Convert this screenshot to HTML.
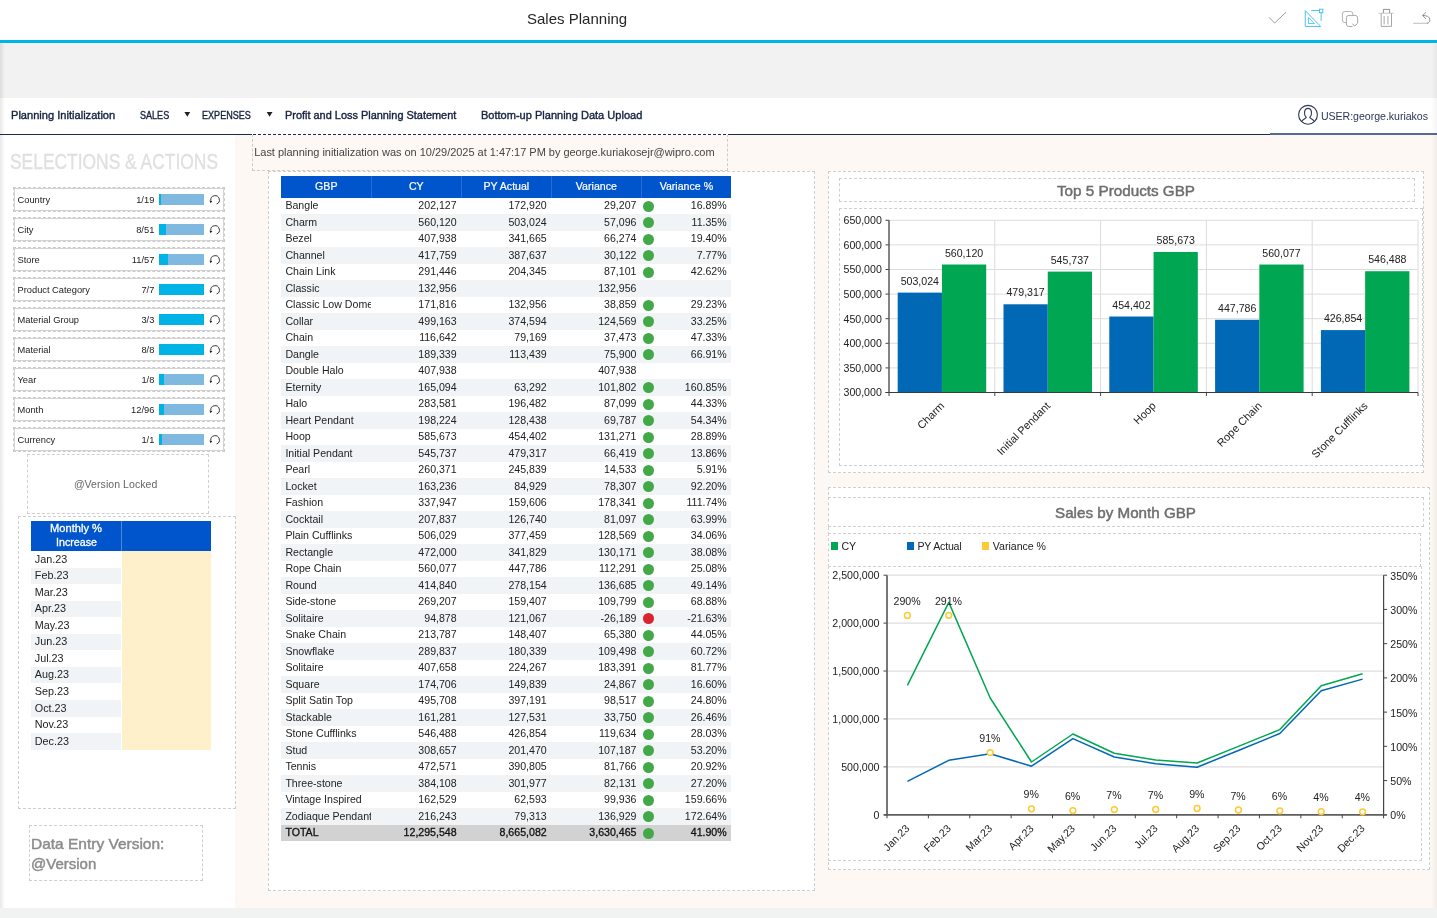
<!DOCTYPE html>
<html lang="en"><head><meta charset="utf-8"><title>Sales Planning</title>
<style>
html,body{margin:0;padding:0}
body{width:1437px;height:918px;position:relative;overflow:hidden;background:#fff;font-family:"Liberation Sans", sans-serif;}
div,span.t,svg.a{position:absolute}
.t{white-space:nowrap;display:block}
.d{border:1px dashed #cfcfcf}
svg{overflow:visible}
</style></head>
<body>
<div id="app" style="left:0;top:0;width:1437px;height:918px;will-change:transform">
<!-- title bar -->
<div style="left:0.00px;top:0.00px;width:1437.00px;height:40.00px;background:#fff"></div>
<span class="t" style="top:8.70px;font-size:15px;line-height:20px;color:#262626;left:527.00px;transform:scaleX(1.0012);transform-origin:0 0;">Sales Planning</span>
<div style="left:0.00px;top:40.00px;width:1437.00px;height:3.00px;background:#00b4e5"></div>
<div style="left:0.00px;top:43.00px;width:1437.00px;height:55.00px;background:#f2f2f2"></div>
<svg class="a" style="left:1260px;top:0" width="177" height="40" viewBox="1260 0 177 40" fill="none" stroke-linecap="round" stroke-linejoin="round">
<polyline points="1269.4,17.7 1274.6,23 1285.7,12.5" stroke="#9b9b9b" stroke-width="1" stroke-linejoin="miter"/>
<g stroke="#3fc0ee" stroke-width="0.95" stroke-linejoin="miter" stroke-linecap="butt">
<path d="M1305.25,10.6 V26.45 H1320.7 Z"/>
<path d="M1308.45,17.6 V23.55 H1314.3 Z" stroke-width="0.85"/>
<path d="M1311.2,10.55 H1319.4 M1321.15,12.8 V20.8"/>
<rect x="1319.5" y="9.2" width="3.3" height="3.5"/>
</g>
<g stroke="#b3b3b3" stroke-width="1">
<path d="M1346.6,22.6 H1344.9 A2.5,2.5 0 0 1 1342.4,20.1 V14 A2.5,2.5 0 0 1 1344.9,11.5 H1350.4 A2.5,2.5 0 0 1 1352.9,14 V15"/>
<path d="M1352.2,26.5 H1348.9 A2.5,2.5 0 0 1 1346.4,24 V17.9 A2.5,2.5 0 0 1 1348.9,15.4 H1355.1 A2.5,2.5 0 0 1 1357.6,17.9 V23.2" stroke="#a8a8a8"/>
<polyline points="1352.6,23.9 1354.6,26.1 1356.9,24" stroke="#8f8f8f" stroke-width="0.9"/>
</g>
<g stroke="#b0b0b0" stroke-width="0.95" stroke-linecap="butt" stroke-linejoin="miter">
<path d="M1378.5,13.25 H1393.5" stroke="#c4c4c4"/>
<path d="M1383.4,13 V9.4 H1389.6 V13" stroke="#8c8c8c"/>
<path d="M1381.2,13.3 V26.4 H1391.5 V13.3" stroke="#a2a2a2"/>
<path d="M1384.2,16 V24.6 M1387.9,16 V24.6" stroke="#c2c2c2" stroke-width="1.4"/>
</g>
<g stroke="#a9a9a9" stroke-width="0.95">
<path d="M1413.6,23.3 H1427.4" stroke="#bdbdbd" stroke-width="1.1"/>
<path d="M1427.4,23.3 C1430.6,23.1 1430.8,17.6 1427.4,16.3 C1425.9,15.7 1424.2,15.5 1422.7,15.45" stroke="#8f8f8f"/>
<path d="M1425.7,12.6 L1422.6,15.45 L1425.7,18.7" stroke="#8f8f8f"/>
</g>
</svg>
<!-- navigation -->
<div style="left:0.00px;top:98.00px;width:1437.00px;height:36.00px;background:#fff"></div>
<span class="t" style="top:106.68px;font-size:11.6px;line-height:15px;color:#15233f;left:11.00px;-webkit-text-stroke:0.4px #15233f;transform:scaleX(0.9565);transform-origin:0 0;">Planning Initialization</span>
<span class="t" style="top:106.68px;font-size:11.6px;line-height:15px;color:#15233f;left:139.70px;-webkit-text-stroke:0.4px #15233f;transform:scaleX(0.7809);transform-origin:0 0;">SALES</span>
<span class="t" style="top:106.68px;font-size:11.6px;line-height:15px;color:#15233f;left:202.30px;-webkit-text-stroke:0.4px #15233f;transform:scaleX(0.7822);transform-origin:0 0;">EXPENSES</span>
<span class="t" style="top:106.68px;font-size:11.6px;line-height:15px;color:#15233f;left:284.60px;-webkit-text-stroke:0.4px #15233f;transform:scaleX(0.9425);transform-origin:0 0;">Profit and Loss Planning Statement</span>
<span class="t" style="top:106.68px;font-size:11.6px;line-height:15px;color:#15233f;left:480.50px;-webkit-text-stroke:0.4px #15233f;transform:scaleX(0.9515);transform-origin:0 0;">Bottom-up Planning Data Upload</span>
<svg class="a" style="left:180px;top:108px" width="100" height="12" viewBox="180 108 100 12"><path d="M184.4,112 H190.2 L187.3,116.8 Z M266.7,112 H272.5 L269.6,116.8 Z" fill="#222"/></svg>
<div style="left:0.00px;top:133.90px;width:1437.00px;height:1.00px;background:#1c2b4d"></div>
<div style="left:1270.00px;top:133.00px;width:167.00px;height:1.90px;background:#566a93"></div>
<svg class="a" style="left:1296px;top:103px" width="24" height="24" viewBox="1296 103 24 24" fill="none" stroke="#2a3756" stroke-width="1.1">
<circle cx="1308" cy="114.8" r="9.4"/>
<path d="M1301.6,121.6 C1302.2,119.4 1305.6,118.9 1306.2,117.5 C1303.4,114.6 1304,108.4 1308,108.4 C1312,108.4 1312.6,114.6 1309.8,117.5 C1310.4,118.9 1313.8,119.4 1314.4,121.6"/>
</svg>
<span class="t" style="top:109.23px;font-size:10.6px;line-height:14px;color:#2a3756;letter-spacing:-0.033px;left:1320.90px;">USER:george.kuriakos</span>
<!-- body backgrounds -->
<div style="left:0.00px;top:134.90px;width:235.00px;height:773.10px;background:#fff"></div>
<div style="left:235.00px;top:134.90px;width:1202.00px;height:773.10px;background:#fdf8f4"></div>
<div style="left:0.00px;top:908.00px;width:1437.00px;height:10.00px;background:#f1f2f2"></div>
<div style="left:0.00px;top:43.00px;width:5.00px;height:865.00px;background:linear-gradient(to right,rgba(0,0,0,.09),rgba(0,0,0,0))"></div>
<div style="left:1431.00px;top:43.00px;width:6.00px;height:865.00px;background:linear-gradient(to left,rgba(0,0,0,.045),rgba(0,0,0,0))"></div>
<!-- selections & actions -->
<span class="t" style="top:148.02px;font-size:21.6px;line-height:28px;color:#e0e0e0;left:10.00px;-webkit-text-stroke:0.35px #e0e0e0;transform:scaleX(0.8062);transform-origin:0 0;">SELECTIONS &amp; ACTIONS</span>
<div class="d" style="left:13.00px;top:187.30px;width:210.20px;height:22.70px;background:#fff;border-color:#cbcbcb"></div>
<div style="left:14.20px;top:188.20px;width:209.80px;height:22.80px;border:1px solid #d3d3d3;box-sizing:border-box"></div>
<span class="t" style="top:193.58px;font-size:9.3px;line-height:12px;color:#222;left:17.50px;">Country</span>
<span class="t" style="top:193.58px;font-size:9.3px;line-height:12px;color:#222;left:-445.70px;width:600px;text-align:right;">1/19</span>
<div style="left:158.90px;top:193.90px;width:45.00px;height:11.00px;background:#7fb9e0"></div>
<div style="left:158.90px;top:193.90px;width:2.40px;height:11.00px;background:#00b3e6"></div>
<svg class="a" style="left:208px;top:193px" width="14" height="14" viewBox="208 193 14 14" fill="none"><path d="M210.8,200.4 A4.3,4.3 0 1 1 216.6,204.0" stroke="#2b2b2b" stroke-width="0.95"/><path d="M209.5,200.6 L212.4,201.0 L210.5,203.3 Z" fill="#1c1c1c"/></svg>
<div class="d" style="left:13.00px;top:217.30px;width:210.20px;height:22.70px;background:#fff;border-color:#cbcbcb"></div>
<div style="left:14.20px;top:218.20px;width:209.80px;height:22.80px;border:1px solid #d3d3d3;box-sizing:border-box"></div>
<span class="t" style="top:223.58px;font-size:9.3px;line-height:12px;color:#222;left:17.50px;">City</span>
<span class="t" style="top:223.58px;font-size:9.3px;line-height:12px;color:#222;left:-445.70px;width:600px;text-align:right;">8/51</span>
<div style="left:158.90px;top:223.90px;width:45.00px;height:11.00px;background:#7fb9e0"></div>
<div style="left:158.90px;top:223.90px;width:7.10px;height:11.00px;background:#00b3e6"></div>
<svg class="a" style="left:208px;top:223px" width="14" height="14" viewBox="208 223 14 14" fill="none"><path d="M210.8,230.4 A4.3,4.3 0 1 1 216.6,234.0" stroke="#2b2b2b" stroke-width="0.95"/><path d="M209.5,230.6 L212.4,231.0 L210.5,233.3 Z" fill="#1c1c1c"/></svg>
<div class="d" style="left:13.00px;top:247.30px;width:210.20px;height:22.70px;background:#fff;border-color:#cbcbcb"></div>
<div style="left:14.20px;top:248.20px;width:209.80px;height:22.80px;border:1px solid #d3d3d3;box-sizing:border-box"></div>
<span class="t" style="top:253.58px;font-size:9.3px;line-height:12px;color:#222;left:17.50px;">Store</span>
<span class="t" style="top:253.58px;font-size:9.3px;line-height:12px;color:#222;left:-445.70px;width:600px;text-align:right;">11/57</span>
<div style="left:158.90px;top:253.90px;width:45.00px;height:11.00px;background:#7fb9e0"></div>
<div style="left:158.90px;top:253.90px;width:8.70px;height:11.00px;background:#00b3e6"></div>
<svg class="a" style="left:208px;top:253px" width="14" height="14" viewBox="208 253 14 14" fill="none"><path d="M210.8,260.4 A4.3,4.3 0 1 1 216.6,264.0" stroke="#2b2b2b" stroke-width="0.95"/><path d="M209.5,260.6 L212.4,261.0 L210.5,263.3 Z" fill="#1c1c1c"/></svg>
<div class="d" style="left:13.00px;top:277.30px;width:210.20px;height:22.70px;background:#fff;border-color:#cbcbcb"></div>
<div style="left:14.20px;top:278.20px;width:209.80px;height:22.80px;border:1px solid #d3d3d3;box-sizing:border-box"></div>
<span class="t" style="top:283.58px;font-size:9.3px;line-height:12px;color:#222;left:17.50px;">Product Category</span>
<span class="t" style="top:283.58px;font-size:9.3px;line-height:12px;color:#222;left:-445.70px;width:600px;text-align:right;">7/7</span>
<div style="left:158.90px;top:283.90px;width:45.00px;height:11.00px;background:#7fb9e0"></div>
<div style="left:158.90px;top:283.90px;width:45.00px;height:11.00px;background:#00b3e6"></div>
<svg class="a" style="left:208px;top:283px" width="14" height="14" viewBox="208 283 14 14" fill="none"><path d="M210.8,290.4 A4.3,4.3 0 1 1 216.6,294.0" stroke="#2b2b2b" stroke-width="0.95"/><path d="M209.5,290.6 L212.4,291.0 L210.5,293.3 Z" fill="#1c1c1c"/></svg>
<div class="d" style="left:13.00px;top:307.30px;width:210.20px;height:22.70px;background:#fff;border-color:#cbcbcb"></div>
<div style="left:14.20px;top:308.20px;width:209.80px;height:22.80px;border:1px solid #d3d3d3;box-sizing:border-box"></div>
<span class="t" style="top:313.58px;font-size:9.3px;line-height:12px;color:#222;left:17.50px;">Material Group</span>
<span class="t" style="top:313.58px;font-size:9.3px;line-height:12px;color:#222;left:-445.70px;width:600px;text-align:right;">3/3</span>
<div style="left:158.90px;top:313.90px;width:45.00px;height:11.00px;background:#7fb9e0"></div>
<div style="left:158.90px;top:313.90px;width:45.00px;height:11.00px;background:#00b3e6"></div>
<svg class="a" style="left:208px;top:313px" width="14" height="14" viewBox="208 313 14 14" fill="none"><path d="M210.8,320.4 A4.3,4.3 0 1 1 216.6,324.0" stroke="#2b2b2b" stroke-width="0.95"/><path d="M209.5,320.6 L212.4,321.0 L210.5,323.3 Z" fill="#1c1c1c"/></svg>
<div class="d" style="left:13.00px;top:337.30px;width:210.20px;height:22.70px;background:#fff;border-color:#cbcbcb"></div>
<div style="left:14.20px;top:338.20px;width:209.80px;height:22.80px;border:1px solid #d3d3d3;box-sizing:border-box"></div>
<span class="t" style="top:343.58px;font-size:9.3px;line-height:12px;color:#222;left:17.50px;">Material</span>
<span class="t" style="top:343.58px;font-size:9.3px;line-height:12px;color:#222;left:-445.70px;width:600px;text-align:right;">8/8</span>
<div style="left:158.90px;top:343.90px;width:45.00px;height:11.00px;background:#7fb9e0"></div>
<div style="left:158.90px;top:343.90px;width:45.00px;height:11.00px;background:#00b3e6"></div>
<svg class="a" style="left:208px;top:343px" width="14" height="14" viewBox="208 343 14 14" fill="none"><path d="M210.8,350.4 A4.3,4.3 0 1 1 216.6,354.0" stroke="#2b2b2b" stroke-width="0.95"/><path d="M209.5,350.6 L212.4,351.0 L210.5,353.3 Z" fill="#1c1c1c"/></svg>
<div class="d" style="left:13.00px;top:367.30px;width:210.20px;height:22.70px;background:#fff;border-color:#cbcbcb"></div>
<div style="left:14.20px;top:368.20px;width:209.80px;height:22.80px;border:1px solid #d3d3d3;box-sizing:border-box"></div>
<span class="t" style="top:373.58px;font-size:9.3px;line-height:12px;color:#222;left:17.50px;">Year</span>
<span class="t" style="top:373.58px;font-size:9.3px;line-height:12px;color:#222;left:-445.70px;width:600px;text-align:right;">1/8</span>
<div style="left:158.90px;top:373.90px;width:45.00px;height:11.00px;background:#7fb9e0"></div>
<div style="left:158.90px;top:373.90px;width:5.60px;height:11.00px;background:#00b3e6"></div>
<svg class="a" style="left:208px;top:373px" width="14" height="14" viewBox="208 373 14 14" fill="none"><path d="M210.8,380.4 A4.3,4.3 0 1 1 216.6,384.0" stroke="#2b2b2b" stroke-width="0.95"/><path d="M209.5,380.6 L212.4,381.0 L210.5,383.3 Z" fill="#1c1c1c"/></svg>
<div class="d" style="left:13.00px;top:397.30px;width:210.20px;height:22.70px;background:#fff;border-color:#cbcbcb"></div>
<div style="left:14.20px;top:398.20px;width:209.80px;height:22.80px;border:1px solid #d3d3d3;box-sizing:border-box"></div>
<span class="t" style="top:403.58px;font-size:9.3px;line-height:12px;color:#222;left:17.50px;">Month</span>
<span class="t" style="top:403.58px;font-size:9.3px;line-height:12px;color:#222;left:-445.70px;width:600px;text-align:right;">12/96</span>
<div style="left:158.90px;top:403.90px;width:45.00px;height:11.00px;background:#7fb9e0"></div>
<div style="left:158.90px;top:403.90px;width:5.60px;height:11.00px;background:#00b3e6"></div>
<svg class="a" style="left:208px;top:403px" width="14" height="14" viewBox="208 403 14 14" fill="none"><path d="M210.8,410.4 A4.3,4.3 0 1 1 216.6,414.0" stroke="#2b2b2b" stroke-width="0.95"/><path d="M209.5,410.6 L212.4,411.0 L210.5,413.3 Z" fill="#1c1c1c"/></svg>
<div class="d" style="left:13.00px;top:427.30px;width:210.20px;height:22.70px;background:#fff;border-color:#cbcbcb"></div>
<div style="left:14.20px;top:428.20px;width:209.80px;height:22.80px;border:1px solid #d3d3d3;box-sizing:border-box"></div>
<span class="t" style="top:433.58px;font-size:9.3px;line-height:12px;color:#222;left:17.50px;">Currency</span>
<span class="t" style="top:433.58px;font-size:9.3px;line-height:12px;color:#222;left:-445.70px;width:600px;text-align:right;">1/1</span>
<div style="left:158.90px;top:433.90px;width:45.00px;height:11.00px;background:#7fb9e0"></div>
<div style="left:158.90px;top:433.90px;width:2.90px;height:11.00px;background:#00b3e6"></div>
<svg class="a" style="left:208px;top:433px" width="14" height="14" viewBox="208 433 14 14" fill="none"><path d="M210.8,440.4 A4.3,4.3 0 1 1 216.6,444.0" stroke="#2b2b2b" stroke-width="0.95"/><path d="M209.5,440.6 L212.4,441.0 L210.5,443.3 Z" fill="#1c1c1c"/></svg>
<div class="d" style="left:27.00px;top:454.00px;width:180.00px;height:58.00px;background:#fff;border-color:#cfcfcf"></div>
<span class="t" style="top:477.36px;font-size:10.5px;line-height:14px;color:#666;letter-spacing:0.069px;left:-184.37px;width:600px;text-align:center;">@Version Locked</span>
<div class="d" style="left:18.30px;top:516.00px;width:215.90px;height:290.60px;background:#fff;border-color:#cfcfcf"></div>
<div style="left:31.20px;top:520.80px;width:180.10px;height:30.20px;background:#0055cc"></div>
<div style="left:121.00px;top:520.80px;width:1.00px;height:30.20px;background:#4d88dd"></div>
<span class="t" style="top:521.06px;font-size:10.8px;line-height:14px;color:#fff;left:50.30px;-webkit-text-stroke:0.3px #fff;transform:scaleX(1.0316);transform-origin:0 0;">Monthly %</span>
<span class="t" style="top:534.86px;font-size:10.8px;line-height:14px;color:#fff;left:55.80px;-webkit-text-stroke:0.3px #fff;transform:scaleX(0.9898);transform-origin:0 0;">Increase</span>
<div style="left:31.20px;top:551.00px;width:90.30px;height:16.56px;background:#fff"></div>
<span class="t" style="top:551.56px;font-size:10.8px;line-height:14px;color:#222;left:34.80px;">Jan.23</span>
<div style="left:31.20px;top:567.56px;width:90.30px;height:16.56px;background:#f1f4f6"></div>
<span class="t" style="top:568.12px;font-size:10.8px;line-height:14px;color:#222;left:34.80px;">Feb.23</span>
<div style="left:31.20px;top:584.12px;width:90.30px;height:16.56px;background:#fff"></div>
<span class="t" style="top:584.68px;font-size:10.8px;line-height:14px;color:#222;left:34.80px;">Mar.23</span>
<div style="left:31.20px;top:600.68px;width:90.30px;height:16.56px;background:#f1f4f6"></div>
<span class="t" style="top:601.24px;font-size:10.8px;line-height:14px;color:#222;left:34.80px;">Apr.23</span>
<div style="left:31.20px;top:617.24px;width:90.30px;height:16.56px;background:#fff"></div>
<span class="t" style="top:617.80px;font-size:10.8px;line-height:14px;color:#222;left:34.80px;">May.23</span>
<div style="left:31.20px;top:633.80px;width:90.30px;height:16.56px;background:#f1f4f6"></div>
<span class="t" style="top:634.36px;font-size:10.8px;line-height:14px;color:#222;left:34.80px;">Jun.23</span>
<div style="left:31.20px;top:650.36px;width:90.30px;height:16.56px;background:#fff"></div>
<span class="t" style="top:650.92px;font-size:10.8px;line-height:14px;color:#222;left:34.80px;">Jul.23</span>
<div style="left:31.20px;top:666.92px;width:90.30px;height:16.56px;background:#f1f4f6"></div>
<span class="t" style="top:667.48px;font-size:10.8px;line-height:14px;color:#222;left:34.80px;">Aug.23</span>
<div style="left:31.20px;top:683.48px;width:90.30px;height:16.56px;background:#fff"></div>
<span class="t" style="top:684.04px;font-size:10.8px;line-height:14px;color:#222;left:34.80px;">Sep.23</span>
<div style="left:31.20px;top:700.04px;width:90.30px;height:16.56px;background:#f1f4f6"></div>
<span class="t" style="top:700.60px;font-size:10.8px;line-height:14px;color:#222;left:34.80px;">Oct.23</span>
<div style="left:31.20px;top:716.60px;width:90.30px;height:16.56px;background:#fff"></div>
<span class="t" style="top:717.16px;font-size:10.8px;line-height:14px;color:#222;left:34.80px;">Nov.23</span>
<div style="left:31.20px;top:733.16px;width:90.30px;height:16.56px;background:#f1f4f6"></div>
<span class="t" style="top:733.72px;font-size:10.8px;line-height:14px;color:#222;left:34.80px;">Dec.23</span>
<div style="left:121.50px;top:551.00px;width:89.80px;height:198.70px;background:#fff0cc"></div>
<div class="d" style="left:29.00px;top:825.00px;width:172.00px;height:53.60px;background:#fff;border-color:#cfcfcf"></div>
<span class="t" style="top:834.74px;font-size:14.6px;line-height:19px;color:#8c8c8c;left:31.30px;-webkit-text-stroke:0.45px #8c8c8c;transform:scaleX(1.0610);transform-origin:0 0;">Data Entry Version:</span>
<span class="t" style="top:854.54px;font-size:14.6px;line-height:19px;color:#8c8c8c;left:31.30px;-webkit-text-stroke:0.45px #8c8c8c;transform:scaleX(1.0283);transform-origin:0 0;">@Version</span>
<!-- info banner -->
<div class="d" style="left:251.80px;top:133.60px;width:474.50px;height:35.40px;background:#fdf8f4;border-color:#d2ccc8"></div>
<div style="left:252.00px;top:134.00px;width:476.00px;height:1.00px;background:repeating-linear-gradient(to right,#fff 0 1.4px,#1c2b4d 1.4px 3.6px,#fff 3.6px 5px)"></div>
<span class="t" style="top:144.99px;font-size:11px;line-height:14px;color:#444;letter-spacing:-0.022px;left:254.20px;">Last planning initialization was on 10/29/2025 at 1:47:17 PM by george.kuriakosejr@wipro.com</span>
<!-- data table -->
<div class="d" style="left:268.00px;top:170.50px;width:545.20px;height:718.10px;background:#fff;border-color:#cfcfcf"></div>
<div style="left:281.30px;top:175.50px;width:450.10px;height:22.30px;background:#0055cc"></div>
<div style="left:370.82px;top:175.50px;width:1.00px;height:22.30px;background:#2a6cd5"></div>
<div style="left:460.84px;top:175.50px;width:1.00px;height:22.30px;background:#2a6cd5"></div>
<div style="left:550.86px;top:175.50px;width:1.00px;height:22.30px;background:#2a6cd5"></div>
<div style="left:640.88px;top:175.50px;width:1.00px;height:22.30px;background:#2a6cd5"></div>
<span class="t" style="top:179.33px;font-size:10.6px;line-height:14px;color:#fff;left:26.31px;width:600px;text-align:center;-webkit-text-stroke:0.2px #fff;">GBP</span>
<span class="t" style="top:179.33px;font-size:10.6px;line-height:14px;color:#fff;left:116.33px;width:600px;text-align:center;-webkit-text-stroke:0.2px #fff;">CY</span>
<span class="t" style="top:179.33px;font-size:10.6px;line-height:14px;color:#fff;left:206.35px;width:600px;text-align:center;-webkit-text-stroke:0.2px #fff;">PY Actual</span>
<span class="t" style="top:179.33px;font-size:10.6px;line-height:14px;color:#fff;left:296.37px;width:600px;text-align:center;-webkit-text-stroke:0.2px #fff;">Variance</span>
<span class="t" style="top:179.33px;font-size:10.6px;line-height:14px;color:#fff;left:386.39px;width:600px;text-align:center;-webkit-text-stroke:0.2px #fff;">Variance %</span>
<div style="left:281.30px;top:197.80px;width:450.10px;height:16.50px;background:#fff"></div>
<span class="t" style="left:285.40px;top:198.38px;width:85.72px;overflow:hidden;font-size:10.6px;line-height:14px;color:#222;">Bangle</span>
<span class="t" style="top:198.38px;font-size:10.6px;line-height:14px;color:#222;left:-143.36px;width:600px;text-align:right;">202,127</span>
<span class="t" style="top:198.38px;font-size:10.6px;line-height:14px;color:#222;left:-53.34px;width:600px;text-align:right;">172,920</span>
<span class="t" style="top:198.38px;font-size:10.6px;line-height:14px;color:#222;left:36.48px;width:600px;text-align:right;">29,207</span>
<div style="left:643.10px;top:200.70px;width:11.00px;height:11.00px;background:#43a847;border-radius:50%"></div>
<span class="t" style="top:198.38px;font-size:10.6px;line-height:14px;color:#222;left:126.70px;width:600px;text-align:right;">16.89%</span>
<div style="left:281.30px;top:214.30px;width:450.10px;height:16.50px;background:#f1f4f6"></div>
<span class="t" style="left:285.40px;top:214.88px;width:85.72px;overflow:hidden;font-size:10.6px;line-height:14px;color:#222;">Charm</span>
<span class="t" style="top:214.88px;font-size:10.6px;line-height:14px;color:#222;left:-143.36px;width:600px;text-align:right;">560,120</span>
<span class="t" style="top:214.88px;font-size:10.6px;line-height:14px;color:#222;left:-53.34px;width:600px;text-align:right;">503,024</span>
<span class="t" style="top:214.88px;font-size:10.6px;line-height:14px;color:#222;left:36.48px;width:600px;text-align:right;">57,096</span>
<div style="left:643.10px;top:217.20px;width:11.00px;height:11.00px;background:#43a847;border-radius:50%"></div>
<span class="t" style="top:214.88px;font-size:10.6px;line-height:14px;color:#222;left:126.70px;width:600px;text-align:right;">11.35%</span>
<div style="left:281.30px;top:230.80px;width:450.10px;height:16.50px;background:#fff"></div>
<span class="t" style="left:285.40px;top:231.38px;width:85.72px;overflow:hidden;font-size:10.6px;line-height:14px;color:#222;">Bezel</span>
<span class="t" style="top:231.38px;font-size:10.6px;line-height:14px;color:#222;left:-143.36px;width:600px;text-align:right;">407,938</span>
<span class="t" style="top:231.38px;font-size:10.6px;line-height:14px;color:#222;left:-53.34px;width:600px;text-align:right;">341,665</span>
<span class="t" style="top:231.38px;font-size:10.6px;line-height:14px;color:#222;left:36.48px;width:600px;text-align:right;">66,274</span>
<div style="left:643.10px;top:233.70px;width:11.00px;height:11.00px;background:#43a847;border-radius:50%"></div>
<span class="t" style="top:231.38px;font-size:10.6px;line-height:14px;color:#222;left:126.70px;width:600px;text-align:right;">19.40%</span>
<div style="left:281.30px;top:247.30px;width:450.10px;height:16.50px;background:#f1f4f6"></div>
<span class="t" style="left:285.40px;top:247.88px;width:85.72px;overflow:hidden;font-size:10.6px;line-height:14px;color:#222;">Channel</span>
<span class="t" style="top:247.88px;font-size:10.6px;line-height:14px;color:#222;left:-143.36px;width:600px;text-align:right;">417,759</span>
<span class="t" style="top:247.88px;font-size:10.6px;line-height:14px;color:#222;left:-53.34px;width:600px;text-align:right;">387,637</span>
<span class="t" style="top:247.88px;font-size:10.6px;line-height:14px;color:#222;left:36.48px;width:600px;text-align:right;">30,122</span>
<div style="left:643.10px;top:250.20px;width:11.00px;height:11.00px;background:#43a847;border-radius:50%"></div>
<span class="t" style="top:247.88px;font-size:10.6px;line-height:14px;color:#222;left:126.70px;width:600px;text-align:right;">7.77%</span>
<div style="left:281.30px;top:263.80px;width:450.10px;height:16.50px;background:#fff"></div>
<span class="t" style="left:285.40px;top:264.38px;width:85.72px;overflow:hidden;font-size:10.6px;line-height:14px;color:#222;">Chain Link</span>
<span class="t" style="top:264.38px;font-size:10.6px;line-height:14px;color:#222;left:-143.36px;width:600px;text-align:right;">291,446</span>
<span class="t" style="top:264.38px;font-size:10.6px;line-height:14px;color:#222;left:-53.34px;width:600px;text-align:right;">204,345</span>
<span class="t" style="top:264.38px;font-size:10.6px;line-height:14px;color:#222;left:36.48px;width:600px;text-align:right;">87,101</span>
<div style="left:643.10px;top:266.70px;width:11.00px;height:11.00px;background:#43a847;border-radius:50%"></div>
<span class="t" style="top:264.38px;font-size:10.6px;line-height:14px;color:#222;left:126.70px;width:600px;text-align:right;">42.62%</span>
<div style="left:281.30px;top:280.30px;width:450.10px;height:16.50px;background:#f1f4f6"></div>
<span class="t" style="left:285.40px;top:280.88px;width:85.72px;overflow:hidden;font-size:10.6px;line-height:14px;color:#222;">Classic</span>
<span class="t" style="top:280.88px;font-size:10.6px;line-height:14px;color:#222;left:-143.36px;width:600px;text-align:right;">132,956</span>
<span class="t" style="top:280.88px;font-size:10.6px;line-height:14px;color:#222;left:36.48px;width:600px;text-align:right;">132,956</span>
<div style="left:281.30px;top:296.80px;width:450.10px;height:16.50px;background:#fff"></div>
<span class="t" style="left:285.40px;top:297.38px;width:85.72px;overflow:hidden;font-size:10.6px;line-height:14px;color:#222;">Classic Low Dome</span>
<span class="t" style="top:297.38px;font-size:10.6px;line-height:14px;color:#222;left:-143.36px;width:600px;text-align:right;">171,816</span>
<span class="t" style="top:297.38px;font-size:10.6px;line-height:14px;color:#222;left:-53.34px;width:600px;text-align:right;">132,956</span>
<span class="t" style="top:297.38px;font-size:10.6px;line-height:14px;color:#222;left:36.48px;width:600px;text-align:right;">38,859</span>
<div style="left:643.10px;top:299.70px;width:11.00px;height:11.00px;background:#43a847;border-radius:50%"></div>
<span class="t" style="top:297.38px;font-size:10.6px;line-height:14px;color:#222;left:126.70px;width:600px;text-align:right;">29.23%</span>
<div style="left:281.30px;top:313.30px;width:450.10px;height:16.50px;background:#f1f4f6"></div>
<span class="t" style="left:285.40px;top:313.88px;width:85.72px;overflow:hidden;font-size:10.6px;line-height:14px;color:#222;">Collar</span>
<span class="t" style="top:313.88px;font-size:10.6px;line-height:14px;color:#222;left:-143.36px;width:600px;text-align:right;">499,163</span>
<span class="t" style="top:313.88px;font-size:10.6px;line-height:14px;color:#222;left:-53.34px;width:600px;text-align:right;">374,594</span>
<span class="t" style="top:313.88px;font-size:10.6px;line-height:14px;color:#222;left:36.48px;width:600px;text-align:right;">124,569</span>
<div style="left:643.10px;top:316.20px;width:11.00px;height:11.00px;background:#43a847;border-radius:50%"></div>
<span class="t" style="top:313.88px;font-size:10.6px;line-height:14px;color:#222;left:126.70px;width:600px;text-align:right;">33.25%</span>
<div style="left:281.30px;top:329.80px;width:450.10px;height:16.50px;background:#fff"></div>
<span class="t" style="left:285.40px;top:330.38px;width:85.72px;overflow:hidden;font-size:10.6px;line-height:14px;color:#222;">Chain</span>
<span class="t" style="top:330.38px;font-size:10.6px;line-height:14px;color:#222;left:-143.36px;width:600px;text-align:right;">116,642</span>
<span class="t" style="top:330.38px;font-size:10.6px;line-height:14px;color:#222;left:-53.34px;width:600px;text-align:right;">79,169</span>
<span class="t" style="top:330.38px;font-size:10.6px;line-height:14px;color:#222;left:36.48px;width:600px;text-align:right;">37,473</span>
<div style="left:643.10px;top:332.70px;width:11.00px;height:11.00px;background:#43a847;border-radius:50%"></div>
<span class="t" style="top:330.38px;font-size:10.6px;line-height:14px;color:#222;left:126.70px;width:600px;text-align:right;">47.33%</span>
<div style="left:281.30px;top:346.30px;width:450.10px;height:16.50px;background:#f1f4f6"></div>
<span class="t" style="left:285.40px;top:346.88px;width:85.72px;overflow:hidden;font-size:10.6px;line-height:14px;color:#222;">Dangle</span>
<span class="t" style="top:346.88px;font-size:10.6px;line-height:14px;color:#222;left:-143.36px;width:600px;text-align:right;">189,339</span>
<span class="t" style="top:346.88px;font-size:10.6px;line-height:14px;color:#222;left:-53.34px;width:600px;text-align:right;">113,439</span>
<span class="t" style="top:346.88px;font-size:10.6px;line-height:14px;color:#222;left:36.48px;width:600px;text-align:right;">75,900</span>
<div style="left:643.10px;top:349.20px;width:11.00px;height:11.00px;background:#43a847;border-radius:50%"></div>
<span class="t" style="top:346.88px;font-size:10.6px;line-height:14px;color:#222;left:126.70px;width:600px;text-align:right;">66.91%</span>
<div style="left:281.30px;top:362.80px;width:450.10px;height:16.50px;background:#fff"></div>
<span class="t" style="left:285.40px;top:363.38px;width:85.72px;overflow:hidden;font-size:10.6px;line-height:14px;color:#222;">Double Halo</span>
<span class="t" style="top:363.38px;font-size:10.6px;line-height:14px;color:#222;left:-143.36px;width:600px;text-align:right;">407,938</span>
<span class="t" style="top:363.38px;font-size:10.6px;line-height:14px;color:#222;left:36.48px;width:600px;text-align:right;">407,938</span>
<div style="left:281.30px;top:379.30px;width:450.10px;height:16.50px;background:#f1f4f6"></div>
<span class="t" style="left:285.40px;top:379.88px;width:85.72px;overflow:hidden;font-size:10.6px;line-height:14px;color:#222;">Eternity</span>
<span class="t" style="top:379.88px;font-size:10.6px;line-height:14px;color:#222;left:-143.36px;width:600px;text-align:right;">165,094</span>
<span class="t" style="top:379.88px;font-size:10.6px;line-height:14px;color:#222;left:-53.34px;width:600px;text-align:right;">63,292</span>
<span class="t" style="top:379.88px;font-size:10.6px;line-height:14px;color:#222;left:36.48px;width:600px;text-align:right;">101,802</span>
<div style="left:643.10px;top:382.20px;width:11.00px;height:11.00px;background:#43a847;border-radius:50%"></div>
<span class="t" style="top:379.88px;font-size:10.6px;line-height:14px;color:#222;left:126.70px;width:600px;text-align:right;">160.85%</span>
<div style="left:281.30px;top:395.80px;width:450.10px;height:16.50px;background:#fff"></div>
<span class="t" style="left:285.40px;top:396.38px;width:85.72px;overflow:hidden;font-size:10.6px;line-height:14px;color:#222;">Halo</span>
<span class="t" style="top:396.38px;font-size:10.6px;line-height:14px;color:#222;left:-143.36px;width:600px;text-align:right;">283,581</span>
<span class="t" style="top:396.38px;font-size:10.6px;line-height:14px;color:#222;left:-53.34px;width:600px;text-align:right;">196,482</span>
<span class="t" style="top:396.38px;font-size:10.6px;line-height:14px;color:#222;left:36.48px;width:600px;text-align:right;">87,099</span>
<div style="left:643.10px;top:398.70px;width:11.00px;height:11.00px;background:#43a847;border-radius:50%"></div>
<span class="t" style="top:396.38px;font-size:10.6px;line-height:14px;color:#222;left:126.70px;width:600px;text-align:right;">44.33%</span>
<div style="left:281.30px;top:412.30px;width:450.10px;height:16.50px;background:#f1f4f6"></div>
<span class="t" style="left:285.40px;top:412.88px;width:85.72px;overflow:hidden;font-size:10.6px;line-height:14px;color:#222;">Heart Pendant</span>
<span class="t" style="top:412.88px;font-size:10.6px;line-height:14px;color:#222;left:-143.36px;width:600px;text-align:right;">198,224</span>
<span class="t" style="top:412.88px;font-size:10.6px;line-height:14px;color:#222;left:-53.34px;width:600px;text-align:right;">128,438</span>
<span class="t" style="top:412.88px;font-size:10.6px;line-height:14px;color:#222;left:36.48px;width:600px;text-align:right;">69,787</span>
<div style="left:643.10px;top:415.20px;width:11.00px;height:11.00px;background:#43a847;border-radius:50%"></div>
<span class="t" style="top:412.88px;font-size:10.6px;line-height:14px;color:#222;left:126.70px;width:600px;text-align:right;">54.34%</span>
<div style="left:281.30px;top:428.80px;width:450.10px;height:16.50px;background:#fff"></div>
<span class="t" style="left:285.40px;top:429.38px;width:85.72px;overflow:hidden;font-size:10.6px;line-height:14px;color:#222;">Hoop</span>
<span class="t" style="top:429.38px;font-size:10.6px;line-height:14px;color:#222;left:-143.36px;width:600px;text-align:right;">585,673</span>
<span class="t" style="top:429.38px;font-size:10.6px;line-height:14px;color:#222;left:-53.34px;width:600px;text-align:right;">454,402</span>
<span class="t" style="top:429.38px;font-size:10.6px;line-height:14px;color:#222;left:36.48px;width:600px;text-align:right;">131,271</span>
<div style="left:643.10px;top:431.70px;width:11.00px;height:11.00px;background:#43a847;border-radius:50%"></div>
<span class="t" style="top:429.38px;font-size:10.6px;line-height:14px;color:#222;left:126.70px;width:600px;text-align:right;">28.89%</span>
<div style="left:281.30px;top:445.30px;width:450.10px;height:16.50px;background:#f1f4f6"></div>
<span class="t" style="left:285.40px;top:445.88px;width:85.72px;overflow:hidden;font-size:10.6px;line-height:14px;color:#222;">Initial Pendant</span>
<span class="t" style="top:445.88px;font-size:10.6px;line-height:14px;color:#222;left:-143.36px;width:600px;text-align:right;">545,737</span>
<span class="t" style="top:445.88px;font-size:10.6px;line-height:14px;color:#222;left:-53.34px;width:600px;text-align:right;">479,317</span>
<span class="t" style="top:445.88px;font-size:10.6px;line-height:14px;color:#222;left:36.48px;width:600px;text-align:right;">66,419</span>
<div style="left:643.10px;top:448.20px;width:11.00px;height:11.00px;background:#43a847;border-radius:50%"></div>
<span class="t" style="top:445.88px;font-size:10.6px;line-height:14px;color:#222;left:126.70px;width:600px;text-align:right;">13.86%</span>
<div style="left:281.30px;top:461.80px;width:450.10px;height:16.50px;background:#fff"></div>
<span class="t" style="left:285.40px;top:462.38px;width:85.72px;overflow:hidden;font-size:10.6px;line-height:14px;color:#222;">Pearl</span>
<span class="t" style="top:462.38px;font-size:10.6px;line-height:14px;color:#222;left:-143.36px;width:600px;text-align:right;">260,371</span>
<span class="t" style="top:462.38px;font-size:10.6px;line-height:14px;color:#222;left:-53.34px;width:600px;text-align:right;">245,839</span>
<span class="t" style="top:462.38px;font-size:10.6px;line-height:14px;color:#222;left:36.48px;width:600px;text-align:right;">14,533</span>
<div style="left:643.10px;top:464.70px;width:11.00px;height:11.00px;background:#43a847;border-radius:50%"></div>
<span class="t" style="top:462.38px;font-size:10.6px;line-height:14px;color:#222;left:126.70px;width:600px;text-align:right;">5.91%</span>
<div style="left:281.30px;top:478.30px;width:450.10px;height:16.50px;background:#f1f4f6"></div>
<span class="t" style="left:285.40px;top:478.88px;width:85.72px;overflow:hidden;font-size:10.6px;line-height:14px;color:#222;">Locket</span>
<span class="t" style="top:478.88px;font-size:10.6px;line-height:14px;color:#222;left:-143.36px;width:600px;text-align:right;">163,236</span>
<span class="t" style="top:478.88px;font-size:10.6px;line-height:14px;color:#222;left:-53.34px;width:600px;text-align:right;">84,929</span>
<span class="t" style="top:478.88px;font-size:10.6px;line-height:14px;color:#222;left:36.48px;width:600px;text-align:right;">78,307</span>
<div style="left:643.10px;top:481.20px;width:11.00px;height:11.00px;background:#43a847;border-radius:50%"></div>
<span class="t" style="top:478.88px;font-size:10.6px;line-height:14px;color:#222;left:126.70px;width:600px;text-align:right;">92.20%</span>
<div style="left:281.30px;top:494.80px;width:450.10px;height:16.50px;background:#fff"></div>
<span class="t" style="left:285.40px;top:495.38px;width:85.72px;overflow:hidden;font-size:10.6px;line-height:14px;color:#222;">Fashion</span>
<span class="t" style="top:495.38px;font-size:10.6px;line-height:14px;color:#222;left:-143.36px;width:600px;text-align:right;">337,947</span>
<span class="t" style="top:495.38px;font-size:10.6px;line-height:14px;color:#222;left:-53.34px;width:600px;text-align:right;">159,606</span>
<span class="t" style="top:495.38px;font-size:10.6px;line-height:14px;color:#222;left:36.48px;width:600px;text-align:right;">178,341</span>
<div style="left:643.10px;top:497.70px;width:11.00px;height:11.00px;background:#43a847;border-radius:50%"></div>
<span class="t" style="top:495.38px;font-size:10.6px;line-height:14px;color:#222;left:126.70px;width:600px;text-align:right;">111.74%</span>
<div style="left:281.30px;top:511.30px;width:450.10px;height:16.50px;background:#f1f4f6"></div>
<span class="t" style="left:285.40px;top:511.88px;width:85.72px;overflow:hidden;font-size:10.6px;line-height:14px;color:#222;">Cocktail</span>
<span class="t" style="top:511.88px;font-size:10.6px;line-height:14px;color:#222;left:-143.36px;width:600px;text-align:right;">207,837</span>
<span class="t" style="top:511.88px;font-size:10.6px;line-height:14px;color:#222;left:-53.34px;width:600px;text-align:right;">126,740</span>
<span class="t" style="top:511.88px;font-size:10.6px;line-height:14px;color:#222;left:36.48px;width:600px;text-align:right;">81,097</span>
<div style="left:643.10px;top:514.20px;width:11.00px;height:11.00px;background:#43a847;border-radius:50%"></div>
<span class="t" style="top:511.88px;font-size:10.6px;line-height:14px;color:#222;left:126.70px;width:600px;text-align:right;">63.99%</span>
<div style="left:281.30px;top:527.80px;width:450.10px;height:16.50px;background:#fff"></div>
<span class="t" style="left:285.40px;top:528.38px;width:85.72px;overflow:hidden;font-size:10.6px;line-height:14px;color:#222;">Plain Cufflinks</span>
<span class="t" style="top:528.38px;font-size:10.6px;line-height:14px;color:#222;left:-143.36px;width:600px;text-align:right;">506,029</span>
<span class="t" style="top:528.38px;font-size:10.6px;line-height:14px;color:#222;left:-53.34px;width:600px;text-align:right;">377,459</span>
<span class="t" style="top:528.38px;font-size:10.6px;line-height:14px;color:#222;left:36.48px;width:600px;text-align:right;">128,569</span>
<div style="left:643.10px;top:530.70px;width:11.00px;height:11.00px;background:#43a847;border-radius:50%"></div>
<span class="t" style="top:528.38px;font-size:10.6px;line-height:14px;color:#222;left:126.70px;width:600px;text-align:right;">34.06%</span>
<div style="left:281.30px;top:544.30px;width:450.10px;height:16.50px;background:#f1f4f6"></div>
<span class="t" style="left:285.40px;top:544.88px;width:85.72px;overflow:hidden;font-size:10.6px;line-height:14px;color:#222;">Rectangle</span>
<span class="t" style="top:544.88px;font-size:10.6px;line-height:14px;color:#222;left:-143.36px;width:600px;text-align:right;">472,000</span>
<span class="t" style="top:544.88px;font-size:10.6px;line-height:14px;color:#222;left:-53.34px;width:600px;text-align:right;">341,829</span>
<span class="t" style="top:544.88px;font-size:10.6px;line-height:14px;color:#222;left:36.48px;width:600px;text-align:right;">130,171</span>
<div style="left:643.10px;top:547.20px;width:11.00px;height:11.00px;background:#43a847;border-radius:50%"></div>
<span class="t" style="top:544.88px;font-size:10.6px;line-height:14px;color:#222;left:126.70px;width:600px;text-align:right;">38.08%</span>
<div style="left:281.30px;top:560.80px;width:450.10px;height:16.50px;background:#fff"></div>
<span class="t" style="left:285.40px;top:561.38px;width:85.72px;overflow:hidden;font-size:10.6px;line-height:14px;color:#222;">Rope Chain</span>
<span class="t" style="top:561.38px;font-size:10.6px;line-height:14px;color:#222;left:-143.36px;width:600px;text-align:right;">560,077</span>
<span class="t" style="top:561.38px;font-size:10.6px;line-height:14px;color:#222;left:-53.34px;width:600px;text-align:right;">447,786</span>
<span class="t" style="top:561.38px;font-size:10.6px;line-height:14px;color:#222;left:36.48px;width:600px;text-align:right;">112,291</span>
<div style="left:643.10px;top:563.70px;width:11.00px;height:11.00px;background:#43a847;border-radius:50%"></div>
<span class="t" style="top:561.38px;font-size:10.6px;line-height:14px;color:#222;left:126.70px;width:600px;text-align:right;">25.08%</span>
<div style="left:281.30px;top:577.30px;width:450.10px;height:16.50px;background:#f1f4f6"></div>
<span class="t" style="left:285.40px;top:577.88px;width:85.72px;overflow:hidden;font-size:10.6px;line-height:14px;color:#222;">Round</span>
<span class="t" style="top:577.88px;font-size:10.6px;line-height:14px;color:#222;left:-143.36px;width:600px;text-align:right;">414,840</span>
<span class="t" style="top:577.88px;font-size:10.6px;line-height:14px;color:#222;left:-53.34px;width:600px;text-align:right;">278,154</span>
<span class="t" style="top:577.88px;font-size:10.6px;line-height:14px;color:#222;left:36.48px;width:600px;text-align:right;">136,685</span>
<div style="left:643.10px;top:580.20px;width:11.00px;height:11.00px;background:#43a847;border-radius:50%"></div>
<span class="t" style="top:577.88px;font-size:10.6px;line-height:14px;color:#222;left:126.70px;width:600px;text-align:right;">49.14%</span>
<div style="left:281.30px;top:593.80px;width:450.10px;height:16.50px;background:#fff"></div>
<span class="t" style="left:285.40px;top:594.38px;width:85.72px;overflow:hidden;font-size:10.6px;line-height:14px;color:#222;">Side-stone</span>
<span class="t" style="top:594.38px;font-size:10.6px;line-height:14px;color:#222;left:-143.36px;width:600px;text-align:right;">269,207</span>
<span class="t" style="top:594.38px;font-size:10.6px;line-height:14px;color:#222;left:-53.34px;width:600px;text-align:right;">159,407</span>
<span class="t" style="top:594.38px;font-size:10.6px;line-height:14px;color:#222;left:36.48px;width:600px;text-align:right;">109,799</span>
<div style="left:643.10px;top:596.70px;width:11.00px;height:11.00px;background:#43a847;border-radius:50%"></div>
<span class="t" style="top:594.38px;font-size:10.6px;line-height:14px;color:#222;left:126.70px;width:600px;text-align:right;">68.88%</span>
<div style="left:281.30px;top:610.30px;width:450.10px;height:16.50px;background:#f1f4f6"></div>
<span class="t" style="left:285.40px;top:610.88px;width:85.72px;overflow:hidden;font-size:10.6px;line-height:14px;color:#222;">Solitaire</span>
<span class="t" style="top:610.88px;font-size:10.6px;line-height:14px;color:#222;left:-143.36px;width:600px;text-align:right;">94,878</span>
<span class="t" style="top:610.88px;font-size:10.6px;line-height:14px;color:#222;left:-53.34px;width:600px;text-align:right;">121,067</span>
<span class="t" style="top:610.88px;font-size:10.6px;line-height:14px;color:#222;left:36.48px;width:600px;text-align:right;">-26,189</span>
<div style="left:643.10px;top:613.20px;width:11.00px;height:11.00px;background:#d9232e;border-radius:50%"></div>
<span class="t" style="top:610.88px;font-size:10.6px;line-height:14px;color:#222;left:126.70px;width:600px;text-align:right;">-21.63%</span>
<div style="left:281.30px;top:626.80px;width:450.10px;height:16.50px;background:#fff"></div>
<span class="t" style="left:285.40px;top:627.38px;width:85.72px;overflow:hidden;font-size:10.6px;line-height:14px;color:#222;">Snake Chain</span>
<span class="t" style="top:627.38px;font-size:10.6px;line-height:14px;color:#222;left:-143.36px;width:600px;text-align:right;">213,787</span>
<span class="t" style="top:627.38px;font-size:10.6px;line-height:14px;color:#222;left:-53.34px;width:600px;text-align:right;">148,407</span>
<span class="t" style="top:627.38px;font-size:10.6px;line-height:14px;color:#222;left:36.48px;width:600px;text-align:right;">65,380</span>
<div style="left:643.10px;top:629.70px;width:11.00px;height:11.00px;background:#43a847;border-radius:50%"></div>
<span class="t" style="top:627.38px;font-size:10.6px;line-height:14px;color:#222;left:126.70px;width:600px;text-align:right;">44.05%</span>
<div style="left:281.30px;top:643.30px;width:450.10px;height:16.50px;background:#f1f4f6"></div>
<span class="t" style="left:285.40px;top:643.88px;width:85.72px;overflow:hidden;font-size:10.6px;line-height:14px;color:#222;">Snowflake</span>
<span class="t" style="top:643.88px;font-size:10.6px;line-height:14px;color:#222;left:-143.36px;width:600px;text-align:right;">289,837</span>
<span class="t" style="top:643.88px;font-size:10.6px;line-height:14px;color:#222;left:-53.34px;width:600px;text-align:right;">180,339</span>
<span class="t" style="top:643.88px;font-size:10.6px;line-height:14px;color:#222;left:36.48px;width:600px;text-align:right;">109,498</span>
<div style="left:643.10px;top:646.20px;width:11.00px;height:11.00px;background:#43a847;border-radius:50%"></div>
<span class="t" style="top:643.88px;font-size:10.6px;line-height:14px;color:#222;left:126.70px;width:600px;text-align:right;">60.72%</span>
<div style="left:281.30px;top:659.80px;width:450.10px;height:16.50px;background:#fff"></div>
<span class="t" style="left:285.40px;top:660.38px;width:85.72px;overflow:hidden;font-size:10.6px;line-height:14px;color:#222;">Solitaire</span>
<span class="t" style="top:660.38px;font-size:10.6px;line-height:14px;color:#222;left:-143.36px;width:600px;text-align:right;">407,658</span>
<span class="t" style="top:660.38px;font-size:10.6px;line-height:14px;color:#222;left:-53.34px;width:600px;text-align:right;">224,267</span>
<span class="t" style="top:660.38px;font-size:10.6px;line-height:14px;color:#222;left:36.48px;width:600px;text-align:right;">183,391</span>
<div style="left:643.10px;top:662.70px;width:11.00px;height:11.00px;background:#43a847;border-radius:50%"></div>
<span class="t" style="top:660.38px;font-size:10.6px;line-height:14px;color:#222;left:126.70px;width:600px;text-align:right;">81.77%</span>
<div style="left:281.30px;top:676.30px;width:450.10px;height:16.50px;background:#f1f4f6"></div>
<span class="t" style="left:285.40px;top:676.88px;width:85.72px;overflow:hidden;font-size:10.6px;line-height:14px;color:#222;">Square</span>
<span class="t" style="top:676.88px;font-size:10.6px;line-height:14px;color:#222;left:-143.36px;width:600px;text-align:right;">174,706</span>
<span class="t" style="top:676.88px;font-size:10.6px;line-height:14px;color:#222;left:-53.34px;width:600px;text-align:right;">149,839</span>
<span class="t" style="top:676.88px;font-size:10.6px;line-height:14px;color:#222;left:36.48px;width:600px;text-align:right;">24,867</span>
<div style="left:643.10px;top:679.20px;width:11.00px;height:11.00px;background:#43a847;border-radius:50%"></div>
<span class="t" style="top:676.88px;font-size:10.6px;line-height:14px;color:#222;left:126.70px;width:600px;text-align:right;">16.60%</span>
<div style="left:281.30px;top:692.80px;width:450.10px;height:16.50px;background:#fff"></div>
<span class="t" style="left:285.40px;top:693.38px;width:85.72px;overflow:hidden;font-size:10.6px;line-height:14px;color:#222;">Split Satin Top</span>
<span class="t" style="top:693.38px;font-size:10.6px;line-height:14px;color:#222;left:-143.36px;width:600px;text-align:right;">495,708</span>
<span class="t" style="top:693.38px;font-size:10.6px;line-height:14px;color:#222;left:-53.34px;width:600px;text-align:right;">397,191</span>
<span class="t" style="top:693.38px;font-size:10.6px;line-height:14px;color:#222;left:36.48px;width:600px;text-align:right;">98,517</span>
<div style="left:643.10px;top:695.70px;width:11.00px;height:11.00px;background:#43a847;border-radius:50%"></div>
<span class="t" style="top:693.38px;font-size:10.6px;line-height:14px;color:#222;left:126.70px;width:600px;text-align:right;">24.80%</span>
<div style="left:281.30px;top:709.30px;width:450.10px;height:16.50px;background:#f1f4f6"></div>
<span class="t" style="left:285.40px;top:709.88px;width:85.72px;overflow:hidden;font-size:10.6px;line-height:14px;color:#222;">Stackable</span>
<span class="t" style="top:709.88px;font-size:10.6px;line-height:14px;color:#222;left:-143.36px;width:600px;text-align:right;">161,281</span>
<span class="t" style="top:709.88px;font-size:10.6px;line-height:14px;color:#222;left:-53.34px;width:600px;text-align:right;">127,531</span>
<span class="t" style="top:709.88px;font-size:10.6px;line-height:14px;color:#222;left:36.48px;width:600px;text-align:right;">33,750</span>
<div style="left:643.10px;top:712.20px;width:11.00px;height:11.00px;background:#43a847;border-radius:50%"></div>
<span class="t" style="top:709.88px;font-size:10.6px;line-height:14px;color:#222;left:126.70px;width:600px;text-align:right;">26.46%</span>
<div style="left:281.30px;top:725.80px;width:450.10px;height:16.50px;background:#fff"></div>
<span class="t" style="left:285.40px;top:726.38px;width:85.72px;overflow:hidden;font-size:10.6px;line-height:14px;color:#222;">Stone Cufflinks</span>
<span class="t" style="top:726.38px;font-size:10.6px;line-height:14px;color:#222;left:-143.36px;width:600px;text-align:right;">546,488</span>
<span class="t" style="top:726.38px;font-size:10.6px;line-height:14px;color:#222;left:-53.34px;width:600px;text-align:right;">426,854</span>
<span class="t" style="top:726.38px;font-size:10.6px;line-height:14px;color:#222;left:36.48px;width:600px;text-align:right;">119,634</span>
<div style="left:643.10px;top:728.70px;width:11.00px;height:11.00px;background:#43a847;border-radius:50%"></div>
<span class="t" style="top:726.38px;font-size:10.6px;line-height:14px;color:#222;left:126.70px;width:600px;text-align:right;">28.03%</span>
<div style="left:281.30px;top:742.30px;width:450.10px;height:16.50px;background:#f1f4f6"></div>
<span class="t" style="left:285.40px;top:742.88px;width:85.72px;overflow:hidden;font-size:10.6px;line-height:14px;color:#222;">Stud</span>
<span class="t" style="top:742.88px;font-size:10.6px;line-height:14px;color:#222;left:-143.36px;width:600px;text-align:right;">308,657</span>
<span class="t" style="top:742.88px;font-size:10.6px;line-height:14px;color:#222;left:-53.34px;width:600px;text-align:right;">201,470</span>
<span class="t" style="top:742.88px;font-size:10.6px;line-height:14px;color:#222;left:36.48px;width:600px;text-align:right;">107,187</span>
<div style="left:643.10px;top:745.20px;width:11.00px;height:11.00px;background:#43a847;border-radius:50%"></div>
<span class="t" style="top:742.88px;font-size:10.6px;line-height:14px;color:#222;left:126.70px;width:600px;text-align:right;">53.20%</span>
<div style="left:281.30px;top:758.80px;width:450.10px;height:16.50px;background:#fff"></div>
<span class="t" style="left:285.40px;top:759.38px;width:85.72px;overflow:hidden;font-size:10.6px;line-height:14px;color:#222;">Tennis</span>
<span class="t" style="top:759.38px;font-size:10.6px;line-height:14px;color:#222;left:-143.36px;width:600px;text-align:right;">472,571</span>
<span class="t" style="top:759.38px;font-size:10.6px;line-height:14px;color:#222;left:-53.34px;width:600px;text-align:right;">390,805</span>
<span class="t" style="top:759.38px;font-size:10.6px;line-height:14px;color:#222;left:36.48px;width:600px;text-align:right;">81,766</span>
<div style="left:643.10px;top:761.70px;width:11.00px;height:11.00px;background:#43a847;border-radius:50%"></div>
<span class="t" style="top:759.38px;font-size:10.6px;line-height:14px;color:#222;left:126.70px;width:600px;text-align:right;">20.92%</span>
<div style="left:281.30px;top:775.30px;width:450.10px;height:16.50px;background:#f1f4f6"></div>
<span class="t" style="left:285.40px;top:775.88px;width:85.72px;overflow:hidden;font-size:10.6px;line-height:14px;color:#222;">Three-stone</span>
<span class="t" style="top:775.88px;font-size:10.6px;line-height:14px;color:#222;left:-143.36px;width:600px;text-align:right;">384,108</span>
<span class="t" style="top:775.88px;font-size:10.6px;line-height:14px;color:#222;left:-53.34px;width:600px;text-align:right;">301,977</span>
<span class="t" style="top:775.88px;font-size:10.6px;line-height:14px;color:#222;left:36.48px;width:600px;text-align:right;">82,131</span>
<div style="left:643.10px;top:778.20px;width:11.00px;height:11.00px;background:#43a847;border-radius:50%"></div>
<span class="t" style="top:775.88px;font-size:10.6px;line-height:14px;color:#222;left:126.70px;width:600px;text-align:right;">27.20%</span>
<div style="left:281.30px;top:791.80px;width:450.10px;height:16.50px;background:#fff"></div>
<span class="t" style="left:285.40px;top:792.38px;width:85.72px;overflow:hidden;font-size:10.6px;line-height:14px;color:#222;">Vintage Inspired</span>
<span class="t" style="top:792.38px;font-size:10.6px;line-height:14px;color:#222;left:-143.36px;width:600px;text-align:right;">162,529</span>
<span class="t" style="top:792.38px;font-size:10.6px;line-height:14px;color:#222;left:-53.34px;width:600px;text-align:right;">62,593</span>
<span class="t" style="top:792.38px;font-size:10.6px;line-height:14px;color:#222;left:36.48px;width:600px;text-align:right;">99,936</span>
<div style="left:643.10px;top:794.70px;width:11.00px;height:11.00px;background:#43a847;border-radius:50%"></div>
<span class="t" style="top:792.38px;font-size:10.6px;line-height:14px;color:#222;left:126.70px;width:600px;text-align:right;">159.66%</span>
<div style="left:281.30px;top:808.30px;width:450.10px;height:16.50px;background:#f1f4f6"></div>
<span class="t" style="left:285.40px;top:808.88px;width:85.72px;overflow:hidden;font-size:10.6px;line-height:14px;color:#222;">Zodiaque Pendant</span>
<span class="t" style="top:808.88px;font-size:10.6px;line-height:14px;color:#222;left:-143.36px;width:600px;text-align:right;">216,243</span>
<span class="t" style="top:808.88px;font-size:10.6px;line-height:14px;color:#222;left:-53.34px;width:600px;text-align:right;">79,313</span>
<span class="t" style="top:808.88px;font-size:10.6px;line-height:14px;color:#222;left:36.48px;width:600px;text-align:right;">136,929</span>
<div style="left:643.10px;top:811.20px;width:11.00px;height:11.00px;background:#43a847;border-radius:50%"></div>
<span class="t" style="top:808.88px;font-size:10.6px;line-height:14px;color:#222;left:126.70px;width:600px;text-align:right;">172.64%</span>
<div style="left:281.30px;top:824.80px;width:450.10px;height:16.50px;background:#d2d2d2"></div>
<span class="t" style="left:285.40px;top:825.38px;width:85.72px;overflow:hidden;font-size:10.6px;line-height:14px;color:#111;-webkit-text-stroke:0.3px #111;">TOTAL</span>
<span class="t" style="top:825.38px;font-size:10.6px;line-height:14px;color:#111;left:-143.36px;width:600px;text-align:right;-webkit-text-stroke:0.3px #111;">12,295,548</span>
<span class="t" style="top:825.38px;font-size:10.6px;line-height:14px;color:#111;left:-53.34px;width:600px;text-align:right;-webkit-text-stroke:0.3px #111;">8,665,082</span>
<span class="t" style="top:825.38px;font-size:10.6px;line-height:14px;color:#111;left:36.48px;width:600px;text-align:right;-webkit-text-stroke:0.3px #111;">3,630,465</span>
<div style="left:643.10px;top:827.70px;width:11.00px;height:11.00px;background:#43a847;border-radius:50%"></div>
<span class="t" style="top:825.38px;font-size:10.6px;line-height:14px;color:#111;left:126.70px;width:600px;text-align:right;-webkit-text-stroke:0.3px #111;">41.90%</span>
<!-- top 5 products chart -->
<div class="d" style="left:828.00px;top:171.00px;width:594.00px;height:300.00px;background:#fff;border-color:#cfcfcf"></div>
<div class="d" style="left:839.00px;top:178.00px;width:574.00px;height:22.00px;background:#fff;border-color:#cfcfcf"></div>
<div class="d" style="left:839.00px;top:208.00px;width:582.00px;height:256.00px;background:#fff;border-color:#cfcfcf"></div>
<span class="t" style="top:182.44px;font-size:14.6px;line-height:19px;color:#6e6e6e;left:1057.40px;-webkit-text-stroke:0.45px #6e6e6e;transform:scaleX(1.0436);transform-origin:0 0;">Top 5 Products GBP</span>
<svg class="a" style="left:840px;top:210px" width="583" height="255" viewBox="840 210 583 255" font-family='"Liberation Sans", sans-serif' font-size="10.6" fill="#222">
<line x1="889.0" x2="1418.0" y1="220.30" y2="220.30" stroke="#dcdcdc" stroke-width="1"/>
<line x1="885.5" x2="889.0" y1="220.30" y2="220.30" stroke="#444" stroke-width="1"/>
<text x="881.8" y="224.10" text-anchor="end">650,000</text>
<line x1="889.0" x2="1418.0" y1="244.90" y2="244.90" stroke="#dcdcdc" stroke-width="1"/>
<line x1="885.5" x2="889.0" y1="244.90" y2="244.90" stroke="#444" stroke-width="1"/>
<text x="881.8" y="248.70" text-anchor="end">600,000</text>
<line x1="889.0" x2="1418.0" y1="269.50" y2="269.50" stroke="#dcdcdc" stroke-width="1"/>
<line x1="885.5" x2="889.0" y1="269.50" y2="269.50" stroke="#444" stroke-width="1"/>
<text x="881.8" y="273.30" text-anchor="end">550,000</text>
<line x1="889.0" x2="1418.0" y1="294.10" y2="294.10" stroke="#dcdcdc" stroke-width="1"/>
<line x1="885.5" x2="889.0" y1="294.10" y2="294.10" stroke="#444" stroke-width="1"/>
<text x="881.8" y="297.90" text-anchor="end">500,000</text>
<line x1="889.0" x2="1418.0" y1="318.70" y2="318.70" stroke="#dcdcdc" stroke-width="1"/>
<line x1="885.5" x2="889.0" y1="318.70" y2="318.70" stroke="#444" stroke-width="1"/>
<text x="881.8" y="322.50" text-anchor="end">450,000</text>
<line x1="889.0" x2="1418.0" y1="343.30" y2="343.30" stroke="#dcdcdc" stroke-width="1"/>
<line x1="885.5" x2="889.0" y1="343.30" y2="343.30" stroke="#444" stroke-width="1"/>
<text x="881.8" y="347.10" text-anchor="end">400,000</text>
<line x1="889.0" x2="1418.0" y1="367.90" y2="367.90" stroke="#dcdcdc" stroke-width="1"/>
<line x1="885.5" x2="889.0" y1="367.90" y2="367.90" stroke="#444" stroke-width="1"/>
<text x="881.8" y="371.70" text-anchor="end">350,000</text>
<line x1="885.5" x2="889.0" y1="392.50" y2="392.50" stroke="#444" stroke-width="1"/>
<text x="881.8" y="396.30" text-anchor="end">300,000</text>
<line x1="994.80" x2="994.80" y1="220.3" y2="392.5" stroke="#dcdcdc" stroke-width="1"/>
<line x1="1100.60" x2="1100.60" y1="220.3" y2="392.5" stroke="#dcdcdc" stroke-width="1"/>
<line x1="1206.40" x2="1206.40" y1="220.3" y2="392.5" stroke="#dcdcdc" stroke-width="1"/>
<line x1="1312.20" x2="1312.20" y1="220.3" y2="392.5" stroke="#dcdcdc" stroke-width="1"/>
<line x1="1418.00" x2="1418.00" y1="220.3" y2="392.5" stroke="#dcdcdc" stroke-width="1"/>
<rect x="897.70" y="292.61" width="44.25" height="99.89" fill="#0068b5"/>
<rect x="941.95" y="264.52" width="44.25" height="127.98" fill="#00a651"/>
<text x="919.83" y="284.61" text-anchor="middle">503,024</text>
<text x="964.08" y="256.52" text-anchor="middle">560,120</text>
<rect x="1003.50" y="304.28" width="44.25" height="88.22" fill="#0068b5"/>
<rect x="1047.75" y="271.60" width="44.25" height="120.90" fill="#00a651"/>
<text x="1025.62" y="296.28" text-anchor="middle">479,317</text>
<text x="1069.88" y="263.60" text-anchor="middle">545,737</text>
<rect x="1109.30" y="316.53" width="44.25" height="75.97" fill="#0068b5"/>
<rect x="1153.55" y="251.95" width="44.25" height="140.55" fill="#00a651"/>
<text x="1131.42" y="308.53" text-anchor="middle">454,402</text>
<text x="1175.67" y="243.95" text-anchor="middle">585,673</text>
<rect x="1215.10" y="319.79" width="44.25" height="72.71" fill="#0068b5"/>
<rect x="1259.35" y="264.54" width="44.25" height="127.96" fill="#00a651"/>
<text x="1237.23" y="311.79" text-anchor="middle">447,786</text>
<text x="1281.48" y="256.54" text-anchor="middle">560,077</text>
<rect x="1320.90" y="330.09" width="44.25" height="62.41" fill="#0068b5"/>
<rect x="1365.15" y="271.23" width="44.25" height="121.27" fill="#00a651"/>
<text x="1343.03" y="322.09" text-anchor="middle">426,854</text>
<text x="1387.28" y="263.23" text-anchor="middle">546,488</text>
<line x1="889.0" x2="889.0" y1="220.3" y2="393.0" stroke="#5a5a5a" stroke-width="1.5"/>
<line x1="885.5" x2="1418.0" y1="392.5" y2="392.5" stroke="#3a3a3a" stroke-width="1.1"/>
<line x1="889.00" x2="889.00" y1="392.5" y2="396.0" stroke="#444" stroke-width="1"/>
<line x1="994.80" x2="994.80" y1="392.5" y2="396.0" stroke="#444" stroke-width="1"/>
<line x1="1100.60" x2="1100.60" y1="392.5" y2="396.0" stroke="#444" stroke-width="1"/>
<line x1="1206.40" x2="1206.40" y1="392.5" y2="396.0" stroke="#444" stroke-width="1"/>
<line x1="1312.20" x2="1312.20" y1="392.5" y2="396.0" stroke="#444" stroke-width="1"/>
<line x1="1418.00" x2="1418.00" y1="392.5" y2="396.0" stroke="#444" stroke-width="1"/>
<text transform="translate(945.10,406.5) rotate(-45)" text-anchor="end" font-size="11">Charm</text>
<text transform="translate(1050.90,406.5) rotate(-45)" text-anchor="end" font-size="11">Initial Pendant</text>
<text transform="translate(1156.70,406.5) rotate(-45)" text-anchor="end" font-size="11">Hoop</text>
<text transform="translate(1262.50,406.5) rotate(-45)" text-anchor="end" font-size="11">Rope Chain</text>
<text transform="translate(1368.30,406.5) rotate(-45)" text-anchor="end" font-size="11">Stone Cufflinks</text>
</svg>
<!-- sales by month chart -->
<div class="d" style="left:828.00px;top:487.00px;width:600.00px;height:381.00px;background:#fff;border-color:#cfcfcf"></div>
<div class="d" style="left:828.00px;top:497.00px;width:594.00px;height:28.00px;background:#fff;border-color:#cfcfcf"></div>
<div class="d" style="left:828.00px;top:533.00px;width:591.00px;height:32.00px;background:#fff;border-color:#cfcfcf"></div>
<div class="d" style="left:828.00px;top:566.00px;width:592.00px;height:293.00px;background:#fff;border-color:#cfcfcf"></div>
<span class="t" style="top:504.44px;font-size:14.6px;line-height:19px;color:#6e6e6e;left:1054.90px;-webkit-text-stroke:0.45px #6e6e6e;transform:scaleX(1.0408);transform-origin:0 0;">Sales by Month GBP</span>
<div style="left:831.30px;top:542.00px;width:6.90px;height:8.00px;background:#00a651"></div>
<span class="t" style="top:539.23px;font-size:10.6px;line-height:14px;color:#222;left:841.40px;">CY</span>
<div style="left:907.10px;top:542.00px;width:6.90px;height:8.00px;background:#0068b5"></div>
<span class="t" style="top:539.23px;font-size:10.6px;line-height:14px;color:#222;letter-spacing:-0.183px;left:917.40px;">PY Actual</span>
<div style="left:982.20px;top:542.00px;width:6.90px;height:8.00px;background:#ffc933"></div>
<span class="t" style="top:539.23px;font-size:10.6px;line-height:14px;color:#222;letter-spacing:-0.019px;left:992.80px;">Variance %</span>
<svg class="a" style="left:830px;top:567px" width="591" height="293" viewBox="830 567 591 293" font-family='"Liberation Sans", sans-serif' font-size="10.6" fill="#222">
<line x1="887.0" x2="1383.6" y1="575.20" y2="575.20" stroke="#dedede" stroke-width="1.2"/>
<line x1="883.5" x2="887.0" y1="575.20" y2="575.20" stroke="#444" stroke-width="1"/>
<text x="879.5" y="579.00" text-anchor="end">2,500,000</text>
<line x1="887.0" x2="1383.6" y1="623.12" y2="623.12" stroke="#dedede" stroke-width="1.2"/>
<line x1="883.5" x2="887.0" y1="623.12" y2="623.12" stroke="#444" stroke-width="1"/>
<text x="879.5" y="626.92" text-anchor="end">2,000,000</text>
<line x1="887.0" x2="1383.6" y1="671.04" y2="671.04" stroke="#dedede" stroke-width="1.2"/>
<line x1="883.5" x2="887.0" y1="671.04" y2="671.04" stroke="#444" stroke-width="1"/>
<text x="879.5" y="674.84" text-anchor="end">1,500,000</text>
<line x1="887.0" x2="1383.6" y1="718.96" y2="718.96" stroke="#dedede" stroke-width="1.2"/>
<line x1="883.5" x2="887.0" y1="718.96" y2="718.96" stroke="#444" stroke-width="1"/>
<text x="879.5" y="722.76" text-anchor="end">1,000,000</text>
<line x1="887.0" x2="1383.6" y1="766.88" y2="766.88" stroke="#dedede" stroke-width="1.2"/>
<line x1="883.5" x2="887.0" y1="766.88" y2="766.88" stroke="#444" stroke-width="1"/>
<text x="879.5" y="770.68" text-anchor="end">500,000</text>
<line x1="883.5" x2="887.0" y1="814.80" y2="814.80" stroke="#444" stroke-width="1"/>
<text x="879.5" y="818.60" text-anchor="end">0</text>
<line x1="1383.6" x2="1387.1" y1="575.20" y2="575.20" stroke="#444" stroke-width="1"/>
<text x="1390.3" y="579.60">350%</text>
<line x1="1383.6" x2="1387.1" y1="609.43" y2="609.43" stroke="#444" stroke-width="1"/>
<text x="1390.3" y="613.83">300%</text>
<line x1="1383.6" x2="1387.1" y1="643.66" y2="643.66" stroke="#444" stroke-width="1"/>
<text x="1390.3" y="648.06">250%</text>
<line x1="1383.6" x2="1387.1" y1="677.89" y2="677.89" stroke="#444" stroke-width="1"/>
<text x="1390.3" y="682.29">200%</text>
<line x1="1383.6" x2="1387.1" y1="712.11" y2="712.11" stroke="#444" stroke-width="1"/>
<text x="1390.3" y="716.51">150%</text>
<line x1="1383.6" x2="1387.1" y1="746.34" y2="746.34" stroke="#444" stroke-width="1"/>
<text x="1390.3" y="750.74">100%</text>
<line x1="1383.6" x2="1387.1" y1="780.57" y2="780.57" stroke="#444" stroke-width="1"/>
<text x="1390.3" y="784.97">50%</text>
<line x1="1383.6" x2="1387.1" y1="814.80" y2="814.80" stroke="#444" stroke-width="1"/>
<text x="1390.3" y="819.20">0%</text>
<polyline fill="none" stroke="#00a651" stroke-width="1.5" stroke-linejoin="round" points="907.4,685.4 948.8,602.4 990.2,698.0 1031.5,762.0 1072.9,734.0 1114.3,753.2 1155.7,760.1 1197.1,763.0 1238.4,746.4 1279.8,729.6 1321.2,685.7 1362.6,673.8"/>
<polyline fill="none" stroke="#0068b5" stroke-width="1.5" stroke-linejoin="round" points="907.4,781.4 948.8,760.3 990.2,753.7 1031.5,766.2 1072.9,738.6 1114.3,757.0 1155.7,763.7 1197.1,767.2 1238.4,750.5 1279.8,733.5 1321.2,690.8 1362.6,679.1"/>
<line x1="887.0" x2="887.0" y1="575.2" y2="815.3" stroke="#5e5e5e" stroke-width="1.7"/>
<line x1="1383.6" x2="1383.6" y1="575.2" y2="815.3" stroke="#444" stroke-width="1.2"/>
<line x1="883.8" x2="1386.8" y1="814.8" y2="814.8" stroke="#5e5e5e" stroke-width="1.7"/>
<line x1="887.00" x2="887.00" y1="814.8" y2="818.3" stroke="#444" stroke-width="1"/>
<line x1="928.38" x2="928.38" y1="814.8" y2="818.3" stroke="#444" stroke-width="1"/>
<line x1="969.77" x2="969.77" y1="814.8" y2="818.3" stroke="#444" stroke-width="1"/>
<line x1="1011.15" x2="1011.15" y1="814.8" y2="818.3" stroke="#444" stroke-width="1"/>
<line x1="1052.53" x2="1052.53" y1="814.8" y2="818.3" stroke="#444" stroke-width="1"/>
<line x1="1093.92" x2="1093.92" y1="814.8" y2="818.3" stroke="#444" stroke-width="1"/>
<line x1="1135.30" x2="1135.30" y1="814.8" y2="818.3" stroke="#444" stroke-width="1"/>
<line x1="1176.68" x2="1176.68" y1="814.8" y2="818.3" stroke="#444" stroke-width="1"/>
<line x1="1218.07" x2="1218.07" y1="814.8" y2="818.3" stroke="#444" stroke-width="1"/>
<line x1="1259.45" x2="1259.45" y1="814.8" y2="818.3" stroke="#444" stroke-width="1"/>
<line x1="1300.83" x2="1300.83" y1="814.8" y2="818.3" stroke="#444" stroke-width="1"/>
<line x1="1342.22" x2="1342.22" y1="814.8" y2="818.3" stroke="#444" stroke-width="1"/>
<line x1="1383.60" x2="1383.60" y1="814.8" y2="818.3" stroke="#444" stroke-width="1"/>
<circle cx="907.4" cy="615.5" r="2.9" fill="#fff" stroke="#ffc933" stroke-width="1.5"/>
<text x="907.1" y="605.0" text-anchor="middle">290%</text>
<text transform="translate(910.20,829.2) rotate(-45)" text-anchor="end" font-size="10.6">Jan.23</text>
<circle cx="948.8" cy="615.3" r="2.9" fill="#fff" stroke="#ffc933" stroke-width="1.5"/>
<text x="948.5" y="604.8" text-anchor="middle">291%</text>
<text transform="translate(951.58,829.2) rotate(-45)" text-anchor="end" font-size="10.6">Feb.23</text>
<circle cx="990.2" cy="752.6" r="2.9" fill="#fff" stroke="#ffc933" stroke-width="1.5"/>
<text x="989.9" y="742.1" text-anchor="middle">91%</text>
<text transform="translate(992.96,829.2) rotate(-45)" text-anchor="end" font-size="10.6">Mar.23</text>
<circle cx="1031.5" cy="808.8" r="2.9" fill="#fff" stroke="#ffc933" stroke-width="1.5"/>
<text x="1031.2" y="798.3" text-anchor="middle">9%</text>
<text transform="translate(1034.34,829.2) rotate(-45)" text-anchor="end" font-size="10.6">Apr.23</text>
<circle cx="1072.9" cy="810.6" r="2.9" fill="#fff" stroke="#ffc933" stroke-width="1.5"/>
<text x="1072.6" y="800.1" text-anchor="middle">6%</text>
<text transform="translate(1075.72,829.2) rotate(-45)" text-anchor="end" font-size="10.6">May.23</text>
<circle cx="1114.3" cy="809.6" r="2.9" fill="#fff" stroke="#ffc933" stroke-width="1.5"/>
<text x="1114.0" y="799.1" text-anchor="middle">7%</text>
<text transform="translate(1117.10,829.2) rotate(-45)" text-anchor="end" font-size="10.6">Jun.23</text>
<circle cx="1155.7" cy="809.4" r="2.9" fill="#fff" stroke="#ffc933" stroke-width="1.5"/>
<text x="1155.4" y="798.9" text-anchor="middle">7%</text>
<text transform="translate(1158.48,829.2) rotate(-45)" text-anchor="end" font-size="10.6">Jul.23</text>
<circle cx="1197.1" cy="808.5" r="2.9" fill="#fff" stroke="#ffc933" stroke-width="1.5"/>
<text x="1196.8" y="798.0" text-anchor="middle">9%</text>
<text transform="translate(1199.86,829.2) rotate(-45)" text-anchor="end" font-size="10.6">Aug.23</text>
<circle cx="1238.4" cy="810.0" r="2.9" fill="#fff" stroke="#ffc933" stroke-width="1.5"/>
<text x="1238.1" y="799.5" text-anchor="middle">7%</text>
<text transform="translate(1241.24,829.2) rotate(-45)" text-anchor="end" font-size="10.6">Sep.23</text>
<circle cx="1279.8" cy="810.8" r="2.9" fill="#fff" stroke="#ffc933" stroke-width="1.5"/>
<text x="1279.5" y="800.3" text-anchor="middle">6%</text>
<text transform="translate(1282.62,829.2) rotate(-45)" text-anchor="end" font-size="10.6">Oct.23</text>
<circle cx="1321.2" cy="811.6" r="2.9" fill="#fff" stroke="#ffc933" stroke-width="1.5"/>
<text x="1320.9" y="801.1" text-anchor="middle">4%</text>
<text transform="translate(1324.00,829.2) rotate(-45)" text-anchor="end" font-size="10.6">Nov.23</text>
<circle cx="1362.6" cy="811.8" r="2.9" fill="#fff" stroke="#ffc933" stroke-width="1.5"/>
<text x="1362.3" y="801.3" text-anchor="middle">4%</text>
<text transform="translate(1365.38,829.2) rotate(-45)" text-anchor="end" font-size="10.6">Dec.23</text>
</svg>
</div>
</body></html>
